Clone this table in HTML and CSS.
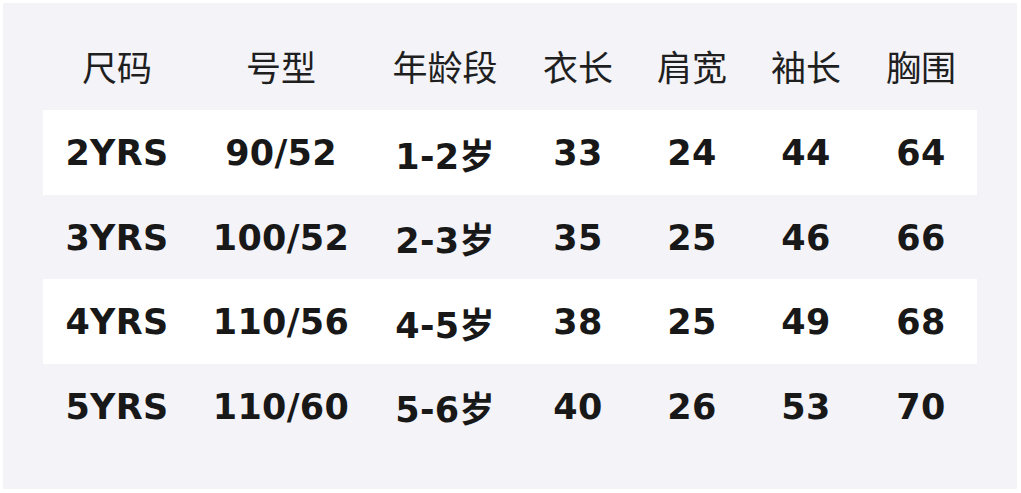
FILE: index.html
```html
<!DOCTYPE html>
<html lang="zh">
<head>
<meta charset="utf-8">
<link rel="stylesheet" href="styles.css">
</head>
<body>
<div class="panel">
  <table class="size-table">
    <colgroup>
      <col class="c1"><col class="c2"><col class="c3"><col class="c4"><col class="c5"><col class="c6"><col class="c7">
    </colgroup>
    <thead>
      <tr><th>尺码</th><th>号型</th><th>年龄段</th><th>衣长</th><th>肩宽</th><th>袖长</th><th>胸围</th></tr>
    </thead>
    <tbody>
      <tr class="alt"><td>2YRS</td><td>90/52</td><td>1-2岁</td><td>33</td><td>24</td><td>44</td><td>64</td></tr>
      <tr><td>3YRS</td><td>100/52</td><td>2-3岁</td><td>35</td><td>25</td><td>46</td><td>66</td></tr>
      <tr class="alt"><td>4YRS</td><td>110/56</td><td>4-5岁</td><td>38</td><td>25</td><td>49</td><td>68</td></tr>
      <tr><td>5YRS</td><td>110/60</td><td>5-6岁</td><td>40</td><td>26</td><td>53</td><td>70</td></tr>
    </tbody>
  </table>
</div>
</body>
</html>
```
FILE: styles.css
```css
html, body {
  margin: 0;
  padding: 0;
  background: #ffffff;
}
body {
  width: 1021px;
  height: 493px;
  padding: 3px 4px 4px 3px;
  box-sizing: border-box;
}
.panel {
  background: #f3f3f8;
  height: 100%;
  padding: 22px 40px 0 40px;
  box-sizing: border-box;
}
.size-table {
  width: 934px;
  border-collapse: collapse;
  table-layout: fixed;
}
.c1 { width: 148px; }
.c2 { width: 180px; }
.c3 { width: 148px; }
.c4 { width: 118px; }
.c5 { width: 110px; }
.c6 { width: 118px; }
.c7 { width: 112px; }
.size-table th {
  height: 85px;
  padding: 0 0 4px 0;
  box-sizing: border-box;
  font-family: "Noto Sans CJK SC", sans-serif;
  font-weight: 400;
  font-size: 35px;
  color: #1f1f1f;
  text-align: center;
  vertical-align: middle;
}
.size-table td {
  height: 84.5px;
  padding: 2px 0 0 0;
  box-sizing: border-box;
  font-family: "DejaVu Sans", "Noto Sans CJK SC", sans-serif;
  font-weight: 700;
  font-size: 35px;
  letter-spacing: 0.3px;
  color: #181818;
  text-align: center;
  vertical-align: middle;
}
.size-table tr.alt td {
  background: #ffffff;
}
```
